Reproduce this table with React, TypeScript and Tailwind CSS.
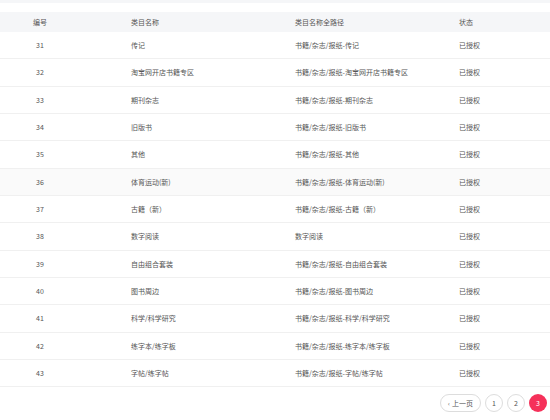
import React from "react";

type Row = { id: number; name: string; path: string; status: string };

const rows: Row[] = [
  { id: 31, name: "传记", path: "书籍/杂志/报纸-传记", status: "已授权" },
  { id: 32, name: "淘宝网开店书籍专区", path: "书籍/杂志/报纸-淘宝网开店书籍专区", status: "已授权" },
  { id: 33, name: "期刊杂志", path: "书籍/杂志/报纸-期刊杂志", status: "已授权" },
  { id: 34, name: "旧版书", path: "书籍/杂志/报纸-旧版书", status: "已授权" },
  { id: 35, name: "其他", path: "书籍/杂志/报纸-其他", status: "已授权" },
  { id: 36, name: "体育运动(新)", path: "书籍/杂志/报纸-体育运动(新)", status: "已授权" },
  { id: 37, name: "古籍（新）", path: "书籍/杂志/报纸-古籍（新）", status: "已授权" },
  { id: 38, name: "数字阅读", path: "数字阅读", status: "已授权" },
  { id: 39, name: "自由组合套装", path: "书籍/杂志/报纸-自由组合套装", status: "已授权" },
  { id: 40, name: "图书周边", path: "书籍/杂志/报纸-图书周边", status: "已授权" },
  { id: 41, name: "科学/科学研究", path: "书籍/杂志/报纸-科学/科学研究", status: "已授权" },
  { id: 42, name: "练字本/练字板", path: "书籍/杂志/报纸-练字本/练字板", status: "已授权" },
  { id: 43, name: "字帖/练字帖", path: "书籍/杂志/报纸-字帖/练字帖", status: "已授权" },
];

const font = { fontFamily: '"Noto Sans CJK SC", "Noto Sans", sans-serif' };

export default function App() {
  return (
    <div className="h-[420px] w-[550px] overflow-hidden bg-white text-[7px] text-[#555]" style={font}>
      <div className="h-[3px] bg-[#f5f6f8]" />
      <div className="mt-[9px]">
        {/* Header */}
        <div className="grid h-[20px] grid-cols-[80px_215px_164px_1fr] items-center bg-[#f5f6f8] text-[#555]">
          <span className="text-center">编号</span>
          <span className="pl-[51px]">类目名称</span>
          <span>类目名称全路径</span>
          <span>状态</span>
        </div>
        {/* Rows */}
        {rows.map((r) => (
          <div
            key={r.id}
            className={`grid h-[27.33px] grid-cols-[80px_215px_164px_1fr] items-center border-b border-[#f0f0f0] ${r.id === 36 ? "bg-[#fafafa]" : ""}`}
          >
            <span className="text-center">{r.id}</span>
            <span className="pl-[51px]">{r.name}</span>
            <span>{r.path}</span>
            <span>{r.status}</span>
          </div>
        ))}
      </div>
      {/* Pagination */}
      <div className="mt-[7px] flex items-center justify-end gap-[4px] pr-[3px]">
        <button className="flex h-[18px] w-[41px] items-center justify-center gap-[2px] rounded-full border border-[#ddd] bg-white text-[7px] text-[#555]">
          <span className="text-[6px]">‹</span>
          <span>上一页</span>
        </button>
        <button className="flex h-[18px] w-[18px] items-center justify-center rounded-full border border-[#ddd] bg-white text-[7px] text-[#555]">1</button>
        <button className="flex h-[18px] w-[18px] items-center justify-center rounded-full border border-[#ddd] bg-white text-[7px] text-[#555]">2</button>
        <button className="flex h-[18px] w-[18px] items-center justify-center rounded-full bg-[#f5315a] text-[7px] text-white">3</button>
      </div>
    </div>
  );
}
